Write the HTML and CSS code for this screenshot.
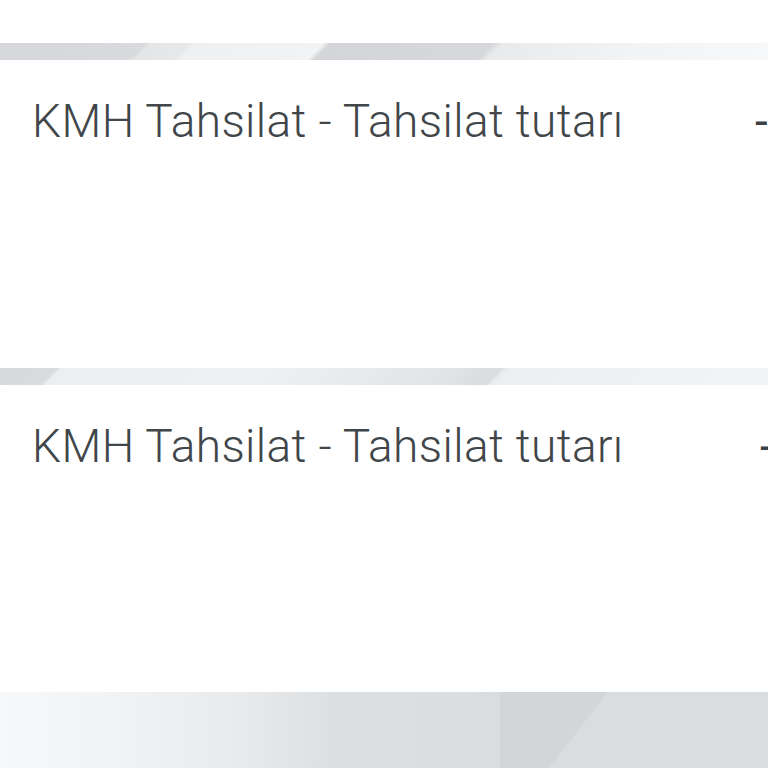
FILE: index.html
```
<!DOCTYPE html>
<html lang="tr">
<head>
    <meta charset="UTF-8">
    <meta name="viewport" content="width=device-width, initial-scale=1.0">
    <title>KMH Tahsilat</title>
    <link rel="stylesheet" href="styles.css">
</head>
<body>
    <div class="top-space"></div>
    <div class="divider divider-one"></div>
    <div class="entry">
        <span class="entry-title">KMH Tahsilat - Tahsilat tutarı</span>
        <span class="entry-amount">-1.250,00 TL</span>
    </div>
    <div class="divider divider-two"></div>
    <div class="entry entry-last">
        <span class="entry-title">KMH Tahsilat - Tahsilat tutarı</span>
        <span class="entry-amount amount-shift">-980,00 TL</span>
    </div>
    <div class="footer-band"></div>
</body>
</html>
```

FILE: styles.css
```
body {
    margin: 0;
    background-color: #fff;
    font-family: Roboto, "Liberation Sans", sans-serif;
    overflow: hidden;
    width: 768px;
}
.top-space {
    height: 43px;
}
.divider {
    height: 17px;
}
/* stripes are slanted like "/" so the stops are along a 135deg line */
.divider-one {
    background: linear-gradient(135deg,
        #d5d7da 0, #d8dadd 103px, #e3e5e7 107px, #e6e8ea 135px,
        #eef0f2 139px, #f1f3f4 229px, #d3d5d8 234px, #d6d8db 349px,
        #e8eaec 356px, #f2f3f5 450px, #f7f8f9 549px);
}
.divider-two {
    background: linear-gradient(135deg,
        #d7d9dc 0, #d9dbde 40px, #eceef0 44px, #eef0f2 190px,
        #e2e4e7 317px, #d9dbde 354px, #eceef0 360px, #f3f4f5 549px);
}
.entry {
    height: 308px;
    padding: 0 0 0 32px;
    display: flex;
    align-items: flex-start;
    white-space: nowrap;
    overflow: hidden;
    box-sizing: border-box;
    background-color: #fff;
}
.entry-last {
    height: 307px;
}
.entry-title {
    font-size: 46px;
    font-weight: 300;
    letter-spacing: 0.4px;
    color: #40464a;
    margin-top: 34px;
    width: 723px;
    flex-shrink: 0;
}
.entry-amount {
    font-size: 46px;
    font-weight: 400;
    color: #3a4044;
    margin-top: 34px;
}
.amount-shift {
    margin-left: 5px;
}
.footer-band {
    height: 76px;
    background:
        linear-gradient(127.8deg, #d3d6d9 85.3px, transparent 85.3px) 500px 0 / 110px 76px no-repeat,
        linear-gradient(90deg, #f7f8f9 0, #f2f3f4 110px, #e8eaec 240px, #dde0e2 330px, #dadde0 500px, #dadde0 768px);
}
```
